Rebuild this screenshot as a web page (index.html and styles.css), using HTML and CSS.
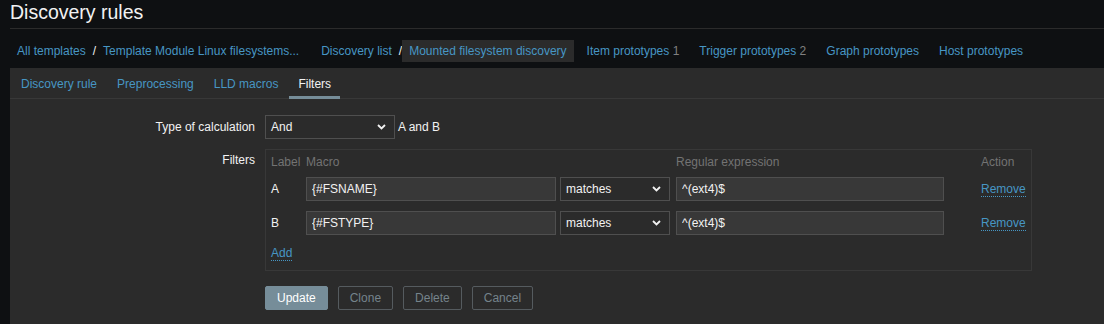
FILE: index.html
```html
<!DOCTYPE html>
<html lang="en">
<head>
    <meta charset="UTF-8">
    <title>Discovery rules</title>
    <link rel="stylesheet" href="styles.css">
</head>
<body>
    <header class="page-header">
        <h1>Discovery rules</h1>
    </header>

    <!-- Breadcrumbs -->
    <nav class="breadcrumbs">
        <ul class="crumb-group">
            <li><a href="#">All templates</a></li>
            <li class="sep">/</li>
            <li><a href="#">Template Module Linux filesystems...</a></li>
        </ul>
        <ul class="crumb-group">
            <li><a href="#">Discovery list</a></li>
            <li class="sep">/</li>
            <li class="selected"><a href="#">Mounted filesystem discovery</a></li>
        </ul>
        <ul class="crumb-group">
            <li><a href="#">Item prototypes</a> <span class="count">1</span></li>
        </ul>
        <ul class="crumb-group">
            <li><a href="#">Trigger prototypes</a> <span class="count">2</span></li>
        </ul>
        <ul class="crumb-group">
            <li><a href="#">Graph prototypes</a></li>
        </ul>
        <ul class="crumb-group">
            <li><a href="#">Host prototypes</a></li>
        </ul>
    </nav>

    <div class="panel">
        <ul class="tabs">
            <li><a href="#">Discovery rule</a></li>
            <li><a href="#">Preprocessing</a></li>
            <li><a href="#">LLD macros</a></li>
            <li class="active"><a href="#">Filters</a></li>
        </ul>

        <form class="form-grid">
            <!-- Type of calculation -->
            <label class="form-label middle">Type of calculation</label>
            <div class="form-field inline">
                <div class="select calc-select">
                    <span>And</span>
                    <svg width="9" height="6" viewBox="0 0 9 6"><path d="M1 1l3.5 3.5L8 1" fill="none" stroke="#f2f2f2" stroke-width="1.8"/></svg>
                </div>
                <span class="calc-text">A and B</span>
            </div>

            <!-- Filters -->
            <label class="form-label top">Filters</label>
            <div class="form-field">
                <div class="filter-table">
                    <div class="th">Label</div>
                    <div class="th">Macro</div>
                    <div class="th"></div>
                    <div class="th">Regular expression</div>
                    <div class="th">Action</div>

                    <div class="td-label">A</div>
                    <div><input class="text-input macro" type="text" value="{#FSNAME}"></div>
                    <div>
                        <div class="select op-select">
                            <span>matches</span>
                            <svg width="9" height="6" viewBox="0 0 9 6"><path d="M1 1l3.5 3.5L8 1" fill="none" stroke="#f2f2f2" stroke-width="1.8"/></svg>
                        </div>
                    </div>
                    <div><input class="text-input regex" type="text" value="^(ext4)$"></div>
                    <div class="td-action"><a class="link-action" href="#">Remove</a></div>

                    <div class="td-label">B</div>
                    <div><input class="text-input macro" type="text" value="{#FSTYPE}"></div>
                    <div>
                        <div class="select op-select">
                            <span>matches</span>
                            <svg width="9" height="6" viewBox="0 0 9 6"><path d="M1 1l3.5 3.5L8 1" fill="none" stroke="#f2f2f2" stroke-width="1.8"/></svg>
                        </div>
                    </div>
                    <div><input class="text-input regex" type="text" value="^(ext4)$"></div>
                    <div class="td-action"><a class="link-action" href="#">Remove</a></div>

                    <div class="add-row"><a class="link-action" href="#">Add</a></div>
                </div>
            </div>

            <!-- Buttons -->
            <div></div>
            <div class="form-buttons">
                <button type="button" class="btn">Update</button>
                <button type="button" class="btn-alt">Clone</button>
                <button type="button" class="btn-alt">Delete</button>
                <button type="button" class="btn-alt">Cancel</button>
            </div>
        </form>
    </div>
</body>
</html>
```

FILE: styles.css
```css
:root {
    --page-bg: #0e1012;
    --panel-bg: #2b2b2b;
    --input-bg: #383838;
    --input-border: #4f4f4f;
    --line-color: #383838;
    --text-color: #f2f2f2;
    --muted-color: #737373;
    --link-color: #4796c4;
    --accent-color: #768d99;
}

* {
    margin: 0;
    padding: 0;
    box-sizing: border-box;
}

body {
    background: var(--page-bg);
    color: var(--text-color);
    font-family: "Liberation Sans", Arial, sans-serif;
    font-size: 12px;
    line-height: 14px;
    padding-left: 10px;
    overflow: hidden;
}

a {
    color: var(--link-color);
    text-decoration: none;
}

ul {
    list-style: none;
}

.page-header {
    height: 29px;
    border-bottom: 1px solid #2b2b2b;
}

.page-header h1 {
    font-size: 19.5px;
    line-height: 24px;
    font-weight: normal;
    color: var(--text-color);
}

/* Breadcrumbs */
.breadcrumbs {
    display: flex;
    margin-top: 11px;
    margin-bottom: 6px;
}

.crumb-group {
    display: flex;
    margin-right: 6px;
}

.crumb-group:first-child {
    margin-right: 8px;
}

.crumb-group li {
    padding: 0 7px;
    line-height: 22px;
    height: 22px;
}

.crumb-group li.sep {
    padding: 0;
    color: var(--text-color);
}

.crumb-group li.selected {
    background: #2b2b2b;
}

.count {
    color: #808080;
}

/* Panel + tabs */
.panel {
    background: var(--panel-bg);
    padding-bottom: 40px;
}

.tabs {
    display: flex;
    padding-left: 2px;
    border-bottom: 1px solid var(--line-color);
}

.tabs li {
    margin-right: 2px;
    margin-bottom: -1px;
}

.tabs a {
    display: block;
    padding: 9px 9px 5px;
    border-bottom: 3px solid transparent;
}

.tabs li.active a {
    color: var(--text-color);
    border-bottom-color: var(--accent-color);
}

/* Form */
.form-grid {
    display: grid;
    grid-template-columns: 245px 1fr;
    column-gap: 10px;
    row-gap: 10px;
    padding-top: 16px;
}

.form-label {
    text-align: right;
}

.form-label.middle {
    align-self: center;
}

.form-label.top {
    padding-top: 4px;
}

.form-field.inline {
    display: flex;
    align-items: center;
}

.calc-text {
    margin-left: 3px;
}

.select {
    display: flex;
    align-items: center;
    justify-content: space-between;
    height: 24px;
    padding: 0 8px 0 5px;
    background: var(--panel-bg);
    border: 1px solid var(--input-border);
    color: var(--text-color);
}

.calc-select {
    width: 130px;
}

.op-select {
    width: 110px;
}

.text-input {
    display: block;
    height: 24px;
    padding: 0 5px;
    background: var(--input-bg);
    border: 1px solid var(--input-border);
    color: var(--text-color);
    font-family: inherit;
    font-size: 12px;
    outline: none;
}

.text-input.macro {
    width: 250px;
}

.text-input.regex {
    width: 268px;
}

.filter-table {
    display: grid;
    grid-template-columns: 35px 254px 116px 305px auto;
    row-gap: 10px;
    width: 767px;
    padding: 0 5px 10px;
    border: 1px solid var(--line-color);
}

.filter-table .th {
    color: var(--muted-color);
    padding-top: 5px;
    height: 17px;
}

.td-label,
.td-action {
    align-self: center;
}

.link-action {
    border-bottom: 1px dotted var(--link-color);
}

.add-row {
    grid-column: 1 / -1;
    padding-top: 1px;
}

.form-buttons {
    display: flex;
    gap: 10px;
    margin-top: 5px;
}

.btn,
.btn-alt {
    height: 24px;
    padding: 0 11px;
    border-radius: 2px;
    font-family: inherit;
    font-size: 12px;
    cursor: pointer;
}

.btn {
    background: var(--accent-color);
    border: 1px solid var(--accent-color);
    color: #ffffff;
}

.btn-alt {
    background: transparent;
    border: 1px solid #555b5f;
    color: #75838b;
}
```
